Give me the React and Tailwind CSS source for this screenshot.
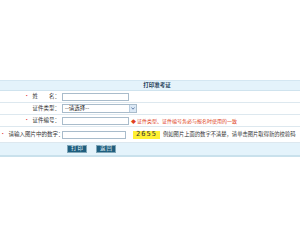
import React from 'react';

const font = { fontFamily: '"Noto Sans CJK SC", "Noto Sans", sans-serif' };

const Star = () => <span className="text-[#e03030] mr-[3px]">•</span>;

const Row = ({ label, star, children, className = '' }) => (
  <div className={`flex items-center border-b border-[#dde8ef] bg-white ${className}`}>
    <div className="w-[62px] shrink-0 text-right pr-[2px] text-[#333] whitespace-nowrap">
      {star && <Star />}
      {label}
    </div>
    <div className="flex items-center flex-1 min-w-0">{children}</div>
  </div>
);

const Input = ({ w }) => (
  <div className={`h-[8px] ${w} bg-white border border-[#a9bccb]`} />
);

const App = () => {
  return (
    <div className="w-[300px] h-[240px] bg-white text-[5.5px] leading-none" style={font}>
      <div className="h-[80px]" />
      <div className="border-t border-[#d4e7f2]">
        {/* title */}
        <div className="h-[10px] flex items-center justify-center pl-[14px] bg-[#e4f3fb] border-b border-[#cfe3ee] font-bold text-[#1f3f5a]">
          打印准考证
        </div>

        <Row label={<span>姓<span className="inline-block w-[11px]" />名：</span>} star className="h-[12px]">
          <Input w="w-[67px]" />
        </Row>

        <Row label="证件类型：" className="h-[12px]">
          <div className="h-[9px] w-[75px] bg-white border border-[#a9bccb] flex items-center">
            <span className="flex-1 pl-[2px] text-[#222]">--请选择--</span>
            <span className="h-full w-[7px] bg-[#dbe8f5] border-l border-[#b8cde0] flex items-center justify-center">
              <svg width="4" height="3" viewBox="0 0 4 3">
                <path d="M0.5 0.5 L2 2.2 L3.5 0.5" fill="none" stroke="#4a6a9a" strokeWidth="0.8" />
              </svg>
            </span>
          </div>
        </Row>

        <Row label="证件编号：" star className="h-[12px]">
          <Input w="w-[67px]" />
          <span className="ml-[2px] text-[5px] text-[#e04020] whitespace-nowrap">◆ 证件类型、证件编号务必与报名时使用的一致</span>
        </Row>

        <Row label="请输入图片中的数字：" star className="h-[16px]">
          <Input w="w-[64px]" />
          <span className="ml-[7px] h-[8px] w-[27px] bg-[#fff033] flex items-center justify-center text-[7px] tracking-[1px] text-[#333]" style={{ fontFamily: '"DejaVu Sans Mono", monospace' }}>
            2655
          </span>
          <span className="ml-[3px] text-[5.3px] text-[#333] whitespace-nowrap">例如图片上面的数字不清楚，请单击图片取得新的校验码</span>
        </Row>

        <div className="h-[14px] flex items-center bg-[#e4f3fb] border-b-2 border-[#c9e1ec]">
          <div className="w-[67px] shrink-0" />
          <div className="h-[8px] w-[20px] bg-[#1e5e7e] border border-[#7fa6b8] text-[#e8f4fa] flex items-center justify-center">打 印</div>
          <div className="w-[9px]" />
          <div className="h-[8px] w-[20px] bg-[#1e5e7e] border border-[#7fa6b8] text-[#e8f4fa] flex items-center justify-center">返 回</div>
        </div>
      </div>
    </div>
  );
};

export default App;
